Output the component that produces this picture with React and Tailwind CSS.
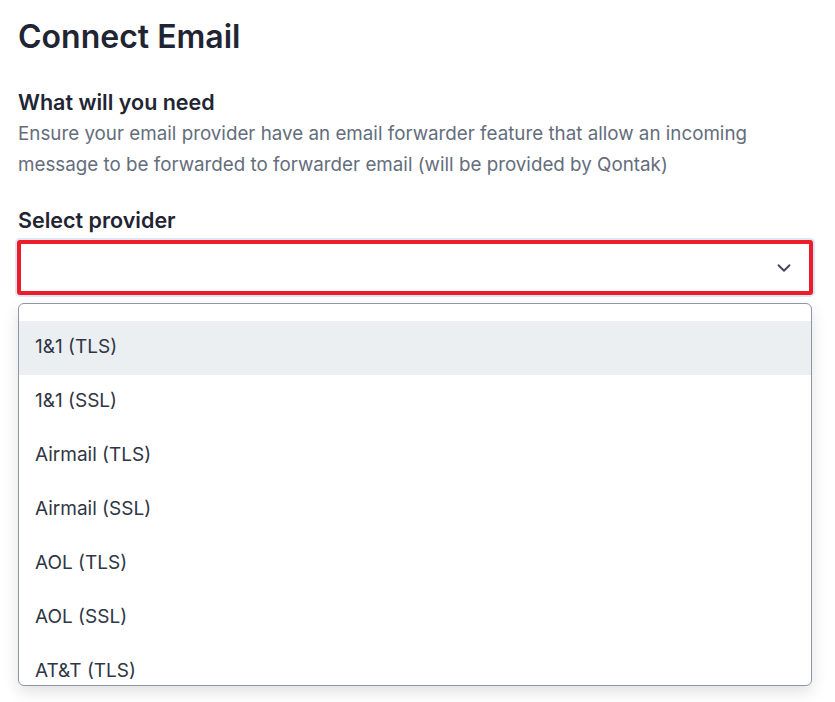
import { ChevronDown } from 'lucide-react';

const providers = [
    '1&1 (TLS)',
    '1&1 (SSL)',
    'Airmail (TLS)',
    'Airmail (SSL)',
    'AOL (TLS)',
    'AOL (SSL)',
    'AT&T (TLS)',
];

export default function App() {
    return (
        <div className="min-h-[702px] bg-white pl-[18px] pr-[23px] pt-[17px] font-['Inter',sans-serif] text-[#1f2533]">
            <h1 className="text-[32px] leading-[40px] font-semibold">Connect Email</h1>

            <h2 className="mt-[31px] text-[21.5px] leading-[28px] font-semibold">What will you need</h2>
            <p className="mt-[2px] text-[18.8px] leading-[31px] text-[#646d7c]">
                Ensure your email provider have an email forwarder feature that allow an incoming message to be forwarded to forwarder email (will be provided by Qontak)
            </p>

            <div className="mt-[26px] text-[21.5px] leading-[28px] font-semibold">Select provider</div>

            {/* Select box */}
            <div className="mt-[6px] -mx-[1px] flex h-[55px] items-center justify-end rounded-[3px] border-4 border-[#ec1c2b] bg-white pr-[14px] shadow-[0_0_0_2px_#dbe6f7]">
                <ChevronDown size={22} strokeWidth={2} className="text-[#3d4656]" />
            </div>

            {/* Dropdown menu */}
            <div className="mt-[8px] h-[383px] overflow-hidden rounded-[6px] border border-[#8c96a8] bg-white pt-[17px] shadow-[0_6px_16px_rgba(0,0,0,0.12)]">
                {providers.map((p, i) => (
                    <div
                        key={p}
                        className={
                            i === 0
                                ? 'flex h-[54px] items-center bg-[#eceff2] px-[16px] pb-[2px] text-[19px] text-[#2f3644]'
                                : 'flex h-[54px] items-center px-[16px] pb-[2px] text-[19px] text-[#2f3644]'
                        }
                    >
                        {p}
                    </div>
                ))}
            </div>
        </div>
    );
}
